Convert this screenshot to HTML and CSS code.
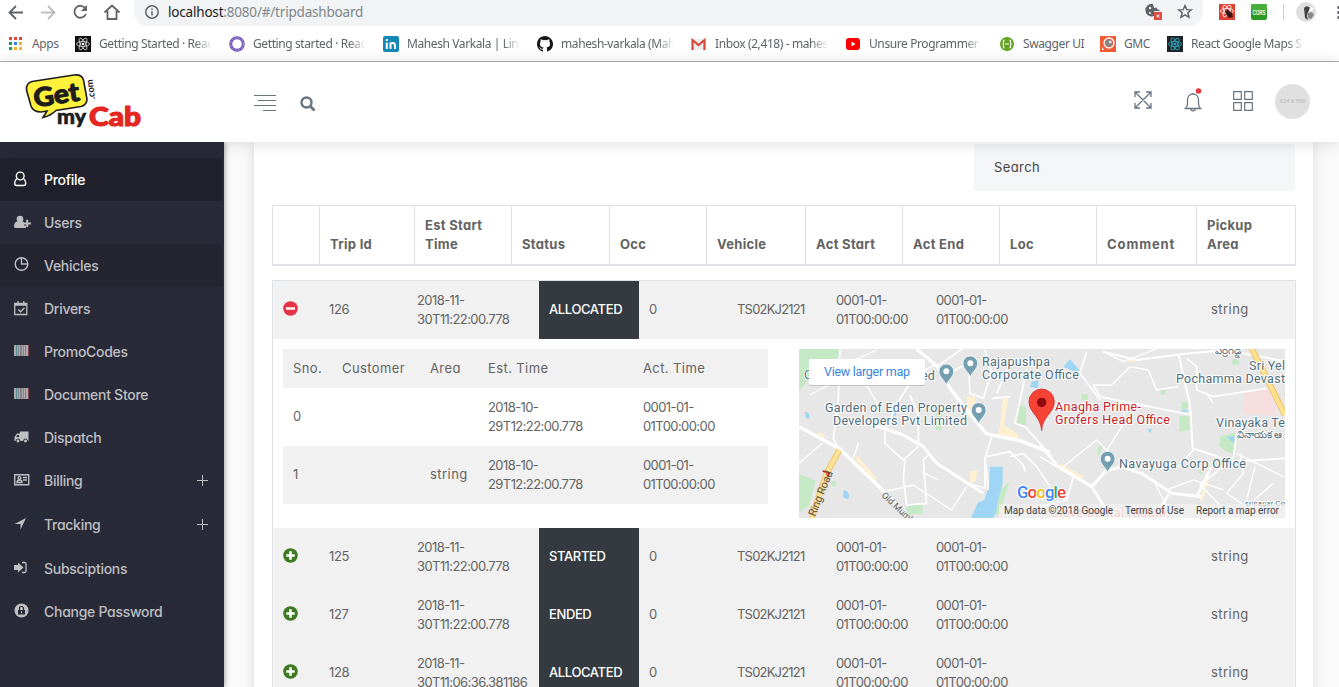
FILE: index.html
```html
<!DOCTYPE html>
<html lang="en">
<head>
<meta charset="utf-8">
<title>Trip Dashboard</title>
<link rel="stylesheet" href="styles.css">
</head>
<body>
<div class="browser">
  <div class="toolbar">
    <svg class="nav" width="130" height="26" viewBox="0 0 130 26" fill="none" stroke="#5f6368" stroke-width="1.800">
      <path d="M23 12.500H10M16 6l-6.500 6.500L16 19"/>
      <path stroke="#bcbec1" d="M41 12.500h13M48 6l6.500 6.500L48 19"/>
      <path d="M85.500 8.500A6 6 0 1 0 86 14"/><path fill="#5f6368" stroke="none" d="M87 5v6h-6z"/>
      <path d="M107.500 11v8h9v-8M104.500 12.500L112 5.500l7.500 7" stroke-linejoin="miter"/>
    </svg>
    <div class="omnibox">
      <svg width="14" height="14" viewBox="0 0 14 14"><circle cx="7" cy="7" r="6.200" fill="none" stroke="#5f6368" stroke-width="1.500"/><path d="M7 6.200v4.300M7 3.500v1.500" stroke="#5f6368" stroke-width="1.500"/></svg>
      <span class="url"><b>localhost</b>:8080/#/tripdashboard</span>
      <svg class="box-icons" width="50" height="20" viewBox="0 0 50 20">
        <path d="M8 2a6.300 6.300 0 1 0 1 12V9h5.500V8l-2-.5-1-2-2.500.5z" fill="#5f6368"/><circle cx="5" cy="6" r="1.200" fill="#f1f3f4"/><circle cx="5" cy="11" r="1" fill="#f1f3f4"/>
        <rect x="9" y="10" width="8" height="8" fill="#e04a3f"/><path d="M11.500 12.500l3 3m0-3l-3 3" stroke="#fff"/>
        <path d="M40 3.500l1.700 4.100 4.600.3-3.500 2.900 1.200 4.500-4-2.500-4 2.500 1.200-4.500-3.500-2.900 4.600-.3z" fill="none" stroke="#5f6368" stroke-width="1.400"/>
      </svg>
    </div>
    <svg class="extensions" width="126" height="26" viewBox="0 0 126 26">
      <rect x="6" y="4" width="16" height="16" fill="#de4034"/>
      <g fill="none" stroke="#fff" stroke-width=".8"><ellipse cx="14" cy="11" rx="6.500" ry="2.600"/><ellipse cx="14" cy="11" rx="6.500" ry="2.600" transform="rotate(60 14 11)"/><ellipse cx="14" cy="11" rx="6.500" ry="2.600" transform="rotate(120 14 11)"/></g>
      <path d="M12 11l3-1 4 3 1 4-4 1-3-4z" fill="#3b1512"/>
      <rect x="38" y="4" width="16" height="16" rx="2" fill="#2b9a25"/><rect x="38" y="4" width="16" height="7" rx="2" fill="#49ad3b"/>
      <text x="39.500" y="14.500" class="cors" textLength="13" lengthAdjust="spacingAndGlyphs">CORS</text>
      <path d="M70.500 4v16" stroke="#c8cacd"/>
      <circle cx="93" cy="12" r="10" fill="#dedede"/>
      <path d="M91 8q2-3 5-1l2 1-3 4-1 4 1 4-3-2z" fill="#444"/><path d="M95 13l4-1 2 3-3 4-3-1z" fill="#888"/><path d="M97 7l4 1-2 3h-3z" fill="#fff"/>
      <g fill="#5f6368"><circle cx="126" cy="7.500" r="1.800"/><circle cx="126" cy="12.500" r="1.800"/><circle cx="126" cy="17.500" r="1.800"/></g>
    </svg>
  </div>
  <div class="bookmarks">
    <div class="mark apps"><svg width="14" height="14" viewBox="0 0 14 14"><path fill="#e8453c" d="M0 0h3v3H0zM5 0h3v3H5zM10 0h3v3h-3z"/><path fill="#1a9c55" d="M0 5h3v3H0zM0 10h3v3H0z"/><path fill="#3b7ded" d="M5 5h3v3H5z"/><path fill="#f4b22e" d="M10 5h3v3h-3zM10 10h3v3h-3z"/><path fill="#f4b22e" d="M5 10h3v3H5z"/></svg><span>Apps</span></div>
    <div class="mark fade"><svg width="16" height="16" viewBox="0 0 16 16"><rect width="16" height="16" fill="#111"/><g fill="none" stroke="#ddd" stroke-width=".8"><ellipse cx="8" cy="8" rx="6.500" ry="2.500"/><ellipse cx="8" cy="8" rx="6.500" ry="2.500" transform="rotate(60 8 8)"/><ellipse cx="8" cy="8" rx="6.500" ry="2.500" transform="rotate(120 8 8)"/></g><circle cx="8" cy="8" r="1.300" fill="#fff"/></svg><span>Getting Started · Reac</span></div>
    <div class="mark fade"><svg width="16" height="16" viewBox="0 0 16 16"><circle cx="8" cy="8" r="6.300" fill="none" stroke="#7555b8" stroke-width="3"/><circle cx="8" cy="8" r="6.300" fill="none" stroke="#b6a3dd" stroke-width="1" stroke-dasharray="2 1.300"/></svg><span>Getting started · Reac</span></div>
    <div class="mark fade"><svg width="16" height="16" viewBox="0 0 16 16"><rect width="16" height="16" rx="2" fill="#1489b8"/><path d="M3.800 6.500V13M3.800 3v2M7.500 13V6.500M7.500 9q0-2 2.200-2t2.300 2.500V13" fill="none" stroke="#fff" stroke-width="2"/></svg><span>Mahesh Varkala | Link</span></div>
    <div class="mark fade"><svg width="16" height="16" viewBox="0 0 16 16"><path fill="#171515" d="M8 0C3.580 0 0 3.580 0 8c0 3.540 2.290 6.530 5.470 7.590.4.070.55-.17.55-.38v-1.490C3.780 14.200 3.300 12.800 3.300 12.800c-.36-.93-.89-1.170-.89-1.170-.73-.5.050-.49.050-.49.810.060 1.230.83 1.230.83.720 1.230 1.880.88 2.340.67.070-.52.280-.88.510-1.080-1.780-.2-3.640-.89-3.640-3.950 0-.87.310-1.590.82-2.150-.08-.2-.36-1.020.08-2.120 0 0 .67-.21 2.200.82a7.600 7.600 0 0 1 4 0c1.530-1.040 2.200-.82 2.200-.82.440 1.100.160 1.920.080 2.120.510.560.820 1.270.820 2.150 0 3.070-1.870 3.750-3.650 3.950.290.250.540.730.540 1.480v2.170c0 .21.150.46.550.38A8 8 0 0 0 8 0z"/></svg><span>mahesh-varkala (Mah</span></div>
    <div class="mark fade"><svg width="16" height="16" viewBox="0 0 16 16"><path fill="#eee" d="M1 3h12v11H1z"/><path d="M1.500 14V4L7.500 9l6-5v10" fill="none" stroke="#d9453a" stroke-width="2.200"/></svg><span>Inbox (2,418) - mahes</span></div>
    <div class="mark fade"><svg width="16" height="16" viewBox="0 0 16 16"><rect x="1" y="2" width="14" height="12" rx="3" fill="#f00"/><path d="M6.500 5.500v5L10.500 8z" fill="#fff"/></svg><span>Unsure Programmer -</span></div>
    <div class="mark swagger"><svg width="16" height="16" viewBox="0 0 16 16"><circle cx="8" cy="8" r="7" fill="#62a420"/><path d="M5.800 4q-1.500 0-1.300 2 0 2-1 2 1 0 1 2-.2 2 1.300 2M10.200 4q1.500 0 1.300 2 0 2 1 2-1 0-1 2 .2 2-1.300 2M6 8h4" fill="none" stroke="#fff" stroke-width="1.200"/></svg><span>Swagger UI</span></div>
    <div class="mark gmc"><svg width="16" height="16" viewBox="0 0 16 16"><rect width="16" height="16" fill="#f45b35"/><circle cx="9" cy="7" r="5" fill="none" stroke="#fff" stroke-width="1.300"/><circle cx="9" cy="7" r="3.500" fill="#888"/><circle cx="10.300" cy="6" r="1.200" fill="#fff"/><path d="M2 14v-3l2 3z" fill="#fff"/></svg><span>GMC</span></div>
    <div class="mark fade"><svg width="16" height="16" viewBox="0 0 16 16"><rect width="16" height="16" fill="#202328"/><g fill="none" stroke="#2fa5c0" stroke-width=".9"><ellipse cx="8" cy="8" rx="6.500" ry="2.500"/><ellipse cx="8" cy="8" rx="6.500" ry="2.500" transform="rotate(60 8 8)"/><ellipse cx="8" cy="8" rx="6.500" ry="2.500" transform="rotate(120 8 8)"/></g><circle cx="8" cy="8" r="1.300" fill="#2fa5c0"/></svg><span>React Google Maps S</span></div>
  </div>
</div>

<header class="topbar">
  <svg class="logo" width="124" height="60" viewBox="0 0 124 60">
    <path d="M12 9.500L54 3q8-1 9.500 5l3.500 19q0 6-6 7.500L36 38.500q-5 5-13 7l4-6.500-6 1q-8 0-10-6L6.500 18q-.5-7 5.500-8.500z" fill="#fff23c" stroke="#1d1d1b" stroke-width="1.600"/>
    <text transform="translate(15 35.500) rotate(-9)" class="logo-get" textLength="46" lengthAdjust="spacingAndGlyphs">Get</text>
    <text transform="translate(75 27) rotate(-97)" class="logo-com" textLength="20" lengthAdjust="spacingAndGlyphs">.com</text>
    <text x="37" y="52" class="logo-my" textLength="29" lengthAdjust="spacingAndGlyphs">my</text>
    <text x="69" y="53.500" class="logo-cab" textLength="52" lengthAdjust="spacingAndGlyphs">Cab</text>
  </svg>
  <svg class="burger" width="22" height="18" viewBox="0 0 22 18"><path d="M0 1.500h22M4 6.500h18M0 11.500h22M9 16.500h13" stroke="#6b757d" stroke-width="1"/></svg>
  <svg class="search-icon" width="16" height="16" viewBox="0 0 16 16"><circle cx="6.500" cy="6.500" r="5" fill="none" stroke="#69757f" stroke-width="2.400"/><path d="M10 10l4.500 4.500" stroke="#69757f" stroke-width="2.800"/></svg>
  <div class="actions">
    <svg width="20" height="20" viewBox="0 0 20 20" fill="none" stroke="#69757f" stroke-width="1.300"><path d="M2 2l16 16M18 2L2 18M2 7V2h5M13 2h5v5M18 13v5h-5M7 18H2v-5"/></svg>
    <svg class="bell" width="20" height="26" viewBox="0 0 20 26" fill="none" stroke="#69757f" stroke-width="1.300"><path d="M1.500 20.500h17M3 20q1.500-1.500 1.500-5v-3c0-8 11-8 11 0v3q0 3.500 1.500 5M8 21v1q2 1.500 4 0v-1M10 6V5"/><circle cx="15.500" cy="3" r="2.800" fill="#e63946" stroke="none"/></svg>
    <svg class="tiles" width="20" height="20" viewBox="0 0 20 20" fill="none" stroke="#69757f" stroke-width="1.200"><path d="M.7.700h7.600v7.600H.7zM11.700.700h7.600v7.600h-7.600zM.7 11.700h7.600v7.600H.7zM11.700 11.700h7.600v7.600h-7.600z"/></svg>
    <span class="avatar">624 X 596</span>
  </div>
</header>

<div class="shell">
  <nav class="sidebar">
    <a class="item active"><svg width="18" height="16" viewBox="0 0 18 16" fill="none" stroke="currentColor" stroke-width="1.400"><path d="M3 7.500Q.7 9 .7 12q0 2.500 2 2.500h7q2 0 2-2.500 0-3-2.300-4.500"/><circle cx="6.200" cy="5" r="3.900"/></svg><span>Profile</span></a>
    <a class="item"><svg width="18" height="16" viewBox="0 0 18 16" fill="currentColor"><circle cx="6" cy="5" r="3.300"/><path d="M0 13q0-5 3-5.500h6l1 1v3h2V14H1zM12.200 5.800h2v2.600H17v2h-2.800V13h-2v-2.600H9.500v-2h2.700z"/></svg><span>Users</span></a>
    <a class="item hover"><svg width="18" height="16" viewBox="0 0 18 16" fill="none" stroke="currentColor" stroke-width="1.400"><circle cx="7.500" cy="7" r="6.300"/><path d="M7.500 1v6h6"/></svg><span>Vehicles</span></a>
    <a class="item"><svg width="18" height="16" viewBox="0 0 18 16" fill="none" stroke="currentColor" stroke-width="1.300"><path d="M.7 3.500h12.100v11H.7zM1 5h12M4 1v3M9.800 1v3M4.200 9.500l2.300 2.300 4-4"/></svg><span>Drivers</span></a>
    <a class="item"><svg width="18" height="16" viewBox="0 0 18 16"><path fill="#aaaaaf" d="M0 2h14v11H0z"/><path fill="#4f8f91" d="M2 2h1v11H2z"/><path fill="#85808c" d="M4 2h1v11H4zM6 2h2v11H6zM9 2h1v11H9zM11 2h1v11h-1z"/><path fill="#873e4b" d="M14 2h1v11h-1z"/></svg><span>PromoCodes</span></a>
    <a class="item"><svg width="18" height="16" viewBox="0 0 18 16"><path fill="#aaaaaf" d="M0 2h14v11H0z"/><path fill="#4f8f91" d="M2 2h1v11H2z"/><path fill="#85808c" d="M4 2h1v11H4zM6 2h2v11H6zM9 2h1v11H9zM11 2h1v11h-1z"/><path fill="#873e4b" d="M14 2h1v11h-1z"/></svg><span>Document Store</span></a>
    <a class="item"><svg width="18" height="16" viewBox="0 0 18 16" fill="currentColor"><path d="M6 2.500h8.500v9.500H.5V8L3 4.500h3zM2 8h3V6H3.500z" fill-rule="evenodd"/><circle cx="4" cy="12" r="2" stroke="#292a38"/><circle cx="11.500" cy="12" r="2" stroke="#292a38"/></svg><span>Dispatch</span></a>
    <a class="item tall"><svg width="18" height="16" viewBox="0 0 18 16" fill="none" stroke="currentColor" stroke-width="1.400"><path d="M.7 2.700h14v10H.7zM9 5.500h4M9 8h4"/><path d="M3 10.500q0-2.500 2.500-2.500T8 10.500z"/><circle cx="5.500" cy="6" r="1.400"/></svg><span>Billing</span><i class="plus"></i></a>
    <a class="item tall"><svg width="18" height="16" viewBox="0 0 18 16" fill="currentColor"><path d="M12 2L6.500 13.500V8H.5z"/></svg><span>Tracking</span><i class="plus"></i></a>
    <a class="item"><svg width="18" height="16" viewBox="0 0 18 16"><path fill="currentColor" d="M0 5h4V2.500L9.500 7.500 4 12.500V10H0z"/><path d="M8 2.500h2.500q1.500 0 1.500 1.500v7q0 1.500-1.500 1.500H8" fill="none" stroke="currentColor" stroke-width="1.300"/></svg><span>Subsciptions</span></a>
    <a class="item"><svg width="18" height="16" viewBox="0 0 18 16"><circle cx="7.500" cy="7.500" r="7" fill="currentColor"/><rect x="4" y="7" width="7" height="4.500" fill="#292a38"/><path d="M5.500 7V5.500q0-2 2-2t2 2V7" fill="none" stroke="#292a38" stroke-width="1.200"/><path d="M7.500 8.300v2" stroke="#c4c4c7"/></svg><span>Change Password</span></a>
  </nav>

  <main class="content">
    <section class="card">
      <div class="search">Search</div>
      <table class="head">
        <colgroup><col style="width:47px"><col style="width:95px"><col style="width:97px"><col style="width:98px"><col style="width:97px"><col style="width:99px"><col style="width:97px"><col style="width:97px"><col style="width:97px"><col style="width:100px"><col style="width:99px"></colgroup>
        <tr><th></th><th>Trip Id</th><th>Est Start<br>Time</th><th>Status</th><th>Occ</th><th>Vehicle</th><th>Act Start</th><th>Act End</th><th>Loc</th><th class="wide">Comment</th><th>Pickup<br>Area</th></tr>
      </table>
      <div class="trips">
        <div class="row"><svg class="sign" width="15" height="15" viewBox="0 0 15 15"><circle cx="7.500" cy="7.500" r="7.300" fill="#e63347"/><path d="M3 7.500h9" stroke="#fff" stroke-width="2.400"/></svg><span class="id">126</span><span class="num">2018-11-<br>30T11:22:00.778</span><span class="status">ALLOCATED</span><span>0</span><span class="veh">TS02KJ2121</span><span class="num">0001-01-<br>01T00:00:00</span><span class="num">0001-01-<br>01T00:00:00</span><span class="word">string</span></div>
        <div class="detail">
          <div class="stops">
            <div class="stop title"><span>Sno.</span><span>Customer</span><span>Area</span><span>Est. Time</span><span>Act. Time</span></div>
            <div class="stop"><span>0</span><span></span><span></span><span class="num">2018-10-<br>29T12:22:00.778</span><span class="num">0001-01-<br>01T00:00:00</span></div>
            <div class="stop odd"><span>1</span><span></span><span class="word">string</span><span class="num">2018-10-<br>29T12:22:00.778</span><span class="num">0001-01-<br>01T00:00:00</span></div>
          </div>
          <svg class="map" width="486" height="169" viewBox="0 0 486 169">
            <defs>
              <g id="poi"><path d="M0 17C-1-1-22-8-22-28a22 22 0 0 1 44 0C22-8 1-1 0 17z" fill="#739fb1" stroke="#fff" stroke-width="2"/><circle cy="-28" r="9" fill="#fff"/></g>
            </defs>
            <rect width="486" height="169" fill="#e7e7e7"/>
            <g transform="translate(-9 -9) scale(.3333)">
              <g fill="#c5e8c5"><path d="M27 27h122l-8 50-60 15-54 60zM27 402l50 20-20 75-30 20zM348 500l50-10v30l-44 5zM438 195l17 5v30l-17 5zM434 250l20 5v15h-15zM690 195l18 8v55l-28-8zM630 450l28-25-15 50-15 45-20 10zM125 422l15 3-3 15-15-3z"/></g>
              <g fill="#9fd5f5"><path d="M600 380h38v50l-15 55-5 35-10 14h-65l20-45 20-10 15-45zM725 125l20-5v25l-25-3zM45 215l10 3 5 17-12 0zM162 450q18 5 15 25-18 5-18-12zM310 210l10 5-5 15-8-10z"/></g>
              <g fill="#fff0d2"><path d="M530 170h25v60h-25zM640 170l15 5-13 80 45 30-5 15-60-10 10-45zM200 345l60 70-5 12-60-70zM540 395l22-5-5 35-18 5zM85 275l20 10-3 10-20-8z"/></g>
              <g fill="none" stroke="#fff" stroke-width="6" stroke-linejoin="round">
                <path d="M380 27l65 55 40 70 80 100 25 30 100 20 90 35" stroke-width="10"/>
                <path d="M27 260l120 65 130 125 80 84" stroke-width="10"/>
                <path d="M220 245l120 40 60 35 40 50 140 90" stroke-width="9"/>
                <path d="M150 27l-5 150-15 120 20 35M440 80l80-55M435 75l-60 30-50 80-40 85v40l60 55-5 50 10 80 60-5-10-130 20-20M385 320l-45 40M385 315v-90l-25-60M535 60l5 100 40 15 25-80-20-65M605 175l55-5M710 90l-35 160 30 10 80 90M605 290l-20 65 0 90-50-15M590 350l70-15 40 40 5 20M535 70l-50 25M655 80l-35 80M585 350l10 100M660 350l40-10 40 40 40 60" stroke-width="5"/>
                <path d="M27 370l70-60M150 80l110-50M60 165l120-65M205 310l-15 45M285 455l85-20 115 75 45-70M395 395l50 25M200 90l70 110" stroke-width="4"/>
              </g>
              <path d="M148 330l-38 70-45 134" fill="none" stroke="#f2bf62" stroke-width="18"/><path d="M148 330l-38 70-45 134" fill="none" stroke="#ffe399" stroke-width="13"/>
              <path d="M98 393l20 6-5 11" fill="none" stroke="#c21f2b" stroke-width="5"/>
            </g>
            <g transform="translate(241 -9) scale(.3333)">
              <g fill="#c5e8c5"><path d="M418 227l35 3v40l-35 5zM425 185h18v20l-18 5zM540 290l45-12-3 65-25-10-18-15zM172 330l12-20 5 5-14 35zM362 147l15 3-3 15h-12zM125 162l18 2v20l-18-5zM580 55l20 8-5 12-20-3zM475 390l15 3-5 10-10-3z"/></g>
              <g fill="#9fd5f5"><path d="M70 80l20-22 30 35-15 2zM322 267l15 1-7 12zM425 209l18 0v6h-18zM560 290l25-2-5 20z"/></g>
              <path d="M615 150l75-3 20 80-100-5z" fill="#f7dede"/>
              <g fill="#fff0d2"><path d="M480 480l20-70 8 2-20 70zM255 60l50-5-25 13zM60 370l70 40-3 8-70-38z"/></g>
              <g fill="none" stroke="#fff" stroke-width="6" stroke-linejoin="round">
                <path d="M0 315l55 65 100 60 40-45 50-15 60 20 90 60 90 10" stroke-width="9"/><path d="M155 440l50 80M385 463l-40 71M515 380l-45 90" stroke-width="8"/>
                <path d="M190 35l100 25 160-20 110-10 180 35M415 40l35 155 8 130 120 40 160-10"/><path d="M180 180l-60-80 20-65M160 135l20 35 75 15 200 40M590 285l-10 70-100 80 60 60M440 55l30 25v70l50 20 160-25M0 350l100 60-20 70-80 20" stroke-width="5"/>
                <path d="M190 35l60 30 100-38M260 185l-15 75-50 80 20 45M160 135h55l55-55 55 10 25 60 65-10M70 380l100-80 50 50M345 430l40 80M460 330l-50 55-90-15M600 340l10 60-50 60 80 55M590 340l140 70M645 380l-30 120M700 430l-80 70M380 450l80-30 90 30M500 160l20 30" stroke-width="4"/>
              </g>
              <path d="M630 15l105 210" stroke="#efbd58" stroke-width="18"/><path d="M630 15l105 210" stroke="#ffe193" stroke-width="13"/>
            </g>
            <g transform="translate(-9 -9) scale(.3333)"><use href="#poi" x="469" y="122"/><use href="#poi" x="541" y="98"/><use href="#poi" x="566" y="238"/><use href="#poi" x="953" y="384"/>
              <path d="M755 272c-3-45-38-53-38-87a38 38 0 0 1 76 0c0 34-35 42-38 87z" fill="#f54336" stroke="#c5221f" stroke-width="2"/><circle cx="755" cy="187" r="14" fill="#8c0b0b"/></g>
            <g class="place">
              <text x="5" y="30">C</text><text x="122" y="31">ed</text>
              <text x="183" y="17" textLength="68">Rajapushpa</text><text x="183" y="30" textLength="97">Corporate Office</text>
              <text x="26" y="63" textLength="142">Garden of Eden Property</text><text x="34" y="76" textLength="134">Developers Pvt Limited</text>
              <text x="320" y="119" textLength="127">Navayuga Corp Office</text>
              <text x="450" y="21" textLength="36">Sri Yel</text><text x="377" y="34" textLength="109">Pochamma Devast</text><text x="417" y="78" textLength="69">Vinayaka Te</text>
              <text x="416" y="5" class="small">ఎర్రగడ్డ</text><text x="438" y="89" class="small">వినాయక ఆ</text>
              <text x="446" y="157" class="tiny" textLength="40">srinagar Co</text>
              <text x="252" y="168" class="clinic" textLength="115">Clove Dental (South</text>
            </g>
            <g class="place red"><text x="256" y="62" textLength="86">Anagha Prime-</text><text x="256" y="75" textLength="115">Grofers Head Office</text></g>
            <text transform="translate(16 168) rotate(-68)" class="road" textLength="48">Ring Road</text>
            <text transform="translate(82 147) rotate(43)" class="road minor">Old Mumb</text>
            <text x="218" y="149" class="google" textLength="49"><tspan fill="#4285f4">G</tspan><tspan fill="#ea4335">o</tspan><tspan fill="#fbbc05">o</tspan><tspan fill="#4285f4">g</tspan><tspan fill="#34a853">l</tspan><tspan fill="#ea4335">e</tspan></text>
            <rect x="200" y="155" width="286" height="14" fill="#f5f5f5" opacity=".6"/>
            <g class="legal"><text x="205" y="165" textLength="109">Map data ©2018 Google</text><text x="326" y="165" textLength="59">Terms of Use</text><text x="397" y="165" textLength="83">Report a map error</text></g>
            <rect x="10" y="11" width="116" height="26" rx="2" fill="#000" opacity=".15"/>
            <rect x="10" y="10" width="116" height="26" rx="2" fill="#fff"/>
            <text x="25" y="27" class="larger" textLength="86">View larger map</text>
          </svg>
        </div>
        <div class="row"><svg class="sign" width="15" height="15" viewBox="0 0 15 15"><circle cx="7.500" cy="7.500" r="7.300" fill="#3e7a21"/><path d="M3.300 7.500h8.400M7.500 3.300v8.400" stroke="#fff" stroke-width="2.600"/></svg><span class="id">125</span><span class="num">2018-11-<br>30T11:22:00.778</span><span class="status">STARTED</span><span>0</span><span class="veh">TS02KJ2121</span><span class="num">0001-01-<br>01T00:00:00</span><span class="num">0001-01-<br>01T00:00:00</span><span class="word">string</span></div>
        <div class="row"><svg class="sign" width="15" height="15" viewBox="0 0 15 15"><circle cx="7.500" cy="7.500" r="7.300" fill="#3e7a21"/><path d="M3.300 7.500h8.400M7.500 3.300v8.400" stroke="#fff" stroke-width="2.600"/></svg><span class="id">127</span><span class="num">2018-11-<br>30T11:22:00.778</span><span class="status">ENDED</span><span>0</span><span class="veh">TS02KJ2121</span><span class="num">0001-01-<br>01T00:00:00</span><span class="num">0001-01-<br>01T00:00:00</span><span class="word">string</span></div>
        <div class="row"><svg class="sign" width="15" height="15" viewBox="0 0 15 15"><circle cx="7.500" cy="7.500" r="7.300" fill="#3e7a21"/><path d="M3.300 7.500h8.400M7.500 3.300v8.400" stroke="#fff" stroke-width="2.600"/></svg><span class="id">128</span><span class="num">2018-11-<br>30T11:06:36.381186</span><span class="status">ALLOCATED</span><span>0</span><span class="veh">TS02KJ2121</span><span class="num">0001-01-<br>01T00:00:00</span><span class="num">0001-01-<br>01T00:00:00</span><span class="word">string</span></div>
      </div>
    </section>
  </main>
</div>
</body>
</html>
```

FILE: styles.css
```css
* { box-sizing: border-box; }
html, body { margin: 0; height: 687px; overflow: hidden; }
body { display: flex; flex-direction: column; background: #fafafa; font: 13px/19px Inter, "Open Sans", sans-serif; font-feature-settings: "cv11"; color: #636363; }
svg { display: block; flex: none; }

/* browser chrome */
.browser { height: 62px; flex: none; background: #fff; border-bottom: 1px solid #b4b4b4; font-family: "Noto Sans", "Open Sans", sans-serif; overflow: hidden; }
.toolbar { display: flex; height: 26px; }
.nav { margin-right: 4px; }
.omnibox { display: flex; align-items: center; width: 1069px; height: 26px; padding: 0 8px 2px 11px; background: #f1f3f4; border-radius: 0 0 14px 14px; }
.url { margin-left: 9px; font-size: 13.5px; letter-spacing: -.19px; color: #80868b; flex: 1; }
.url b { font-weight: 400; color: #202124; }
.extensions { margin-left: 10px; }
.cors { font: bold 7px "Liberation Sans", sans-serif; fill: #fff; }
.bookmarks { display: flex; align-items: center; gap: 17px; height: 35px; padding-left: 9px; }
.mark { display: flex; align-items: center; gap: 8px; font-size: 12px; letter-spacing: -.4px; color: #5f6368; white-space: nowrap; flex: none; }
.apps { width: 49px; gap: 9px; }
.fade span { width: 113px; -webkit-mask-image: linear-gradient(90deg, #000 85%, transparent); mask-image: linear-gradient(90deg, #000 85%, transparent); }
.swagger span { width: 60px; }
.gmc span { width: 26px; }

/* application header */
.topbar { position: relative; z-index: 2; display: flex; height: 80px; flex: none; background: #fff; box-shadow: 0 1px 15px rgba(0,0,0,.14); }
.logo { margin: 10px 0 0 20px; }
.logo-get { font: 900 26px Lato, sans-serif; fill: #1d1d1b; stroke: #1d1d1b; stroke-width: 1px; }
.logo-com { font: 700 9.5px Lato, sans-serif; fill: #1d1d1b; }
.logo-my { font: 900 20px Lato, sans-serif; fill: #1d1d1b; stroke: #1d1d1b; stroke-width: .6px; }
.logo-cab { font: 900 27px Lato, sans-serif; fill: #e52722; stroke: #e52722; stroke-width: 1.2px; }
.burger { margin: 32px 0 0 110px; }
.search-icon { margin: 34px 0 0 24px; }
.actions { display: flex; align-items: center; gap: 30px; height: 76px; margin: 0 29px 0 auto; }
.actions .avatar { margin: 2px 0 0 -8px; }
.bell, .tiles { margin-top: 2px; }
.avatar { width: 35px; height: 35px; border-radius: 50%; background: #e0e0e0; color: #c4c4c4; font: bold 6px/35px "Noto Sans", sans-serif; letter-spacing: -.2px; text-align: center; white-space: nowrap; }

/* sidebar */
.shell { display: flex; height: 545px; }
.sidebar { position: relative; z-index: 1; width: 224px; flex: none; padding-top: 16px; background: #292a38; box-shadow: 1px 0 5px rgba(0,0,0,.35); }
.item { display: flex; align-items: center; width: 222px; height: 43px; padding: 0 14px 1px 14px; font-size: 14px; font-weight: 500; letter-spacing: -.28px; color: #bfbfc3; }
.item svg { margin-bottom: 1px; }
.item span { margin-left: 12px; }
.item.tall { margin-bottom: 1px; }
.active { background: #20212c; color: #fff; }
.hover { background: #242531; }
.plus { width: 11px; height: 11px; margin-left: auto; background: linear-gradient(#bfbfc3, #bfbfc3) 5px 0 / 1px 11px no-repeat, linear-gradient(#bfbfc3, #bfbfc3) 0 5px / 11px 1px no-repeat; }

/* content card */
.content { flex: 1; padding: 0 26px 0 30px; overflow: hidden; }
.card { display: flex; flex-direction: column; height: 560px; padding: 2px 17px 0 18px; background: #fff; box-shadow: 0 0 12px rgba(0,0,0,.13); }
.search { align-self: flex-end; width: 321px; height: 47px; flex: none; margin-right: 1px; padding-left: 20px; border-radius: 3px; background: #f5f6f8; color: #444; line-height: 47px; letter-spacing: .4px; }
.head { width: 1024px; height: 60px; flex: none; margin-top: 14px; table-layout: fixed; border-collapse: collapse; }
.head th { height: 59px; padding: 9px 10px 10px; border: 1px solid #dee2e6; border-bottom-width: 2px; text-align: left; vertical-align: bottom; font-weight: 700; letter-spacing: .3px; white-space: nowrap; }
.head th.wide { letter-spacing: .9px; }
.trips { width: 1024px; flex: none; margin-top: 14px; border: 1px solid #dee2e6; }
.row { display: grid; grid-template-columns: 46px 88px 132px 100px 88px 99px 100px 275px 94px; align-items: center; height: 58px; background: #f1f1f1; }
.row > * { margin-left: 10px; white-space: nowrap; }
.row .status { display: flex; align-items: center; height: 58px; margin: 0; padding-left: 10px; background: #343a40; color: #fff; font-weight: 500; letter-spacing: -.38px; }
.row .sign { margin-top: -2px; }
.id { letter-spacing: -.4px; }
.num { letter-spacing: -.58px; }
.veh { letter-spacing: -.8px; }
.word { letter-spacing: .45px; }
.detail { display: flex; justify-content: space-between; height: 189px; padding: 10px; background: #fff; }
.stops { width: 485px; }
.stop { display: grid; grid-template-columns: 49px 88px 58px 155px 1fr; align-items: center; height: 58px; padding-left: 10px; }
.title { height: 39px; letter-spacing: .4px; }
.title, .odd { background: #f1f1f1; }

/* map */
.map { font-family: Roboto, sans-serif; }
.place { font-size: 12.5px; fill: #4d6b78; stroke: #fff; stroke-width: 2px; paint-order: stroke; stroke-linejoin: round; }
.place .small { font-size: 10px; }
.place .tiny { font-size: 8px; }
.place .clinic { fill: #e98d8d; }
.place.red { fill: #c5221f; }
.road { font-size: 11px; fill: #5c5240; }
.road.minor { font-size: 9px; fill: #555; }
.google { font-size: 17px; font-weight: 500; stroke: #fff; stroke-width: 2px; paint-order: stroke; }
.legal { font-size: 10px; fill: #444; }
.larger { font-size: 12.5px; fill: #3a84df; }
```
